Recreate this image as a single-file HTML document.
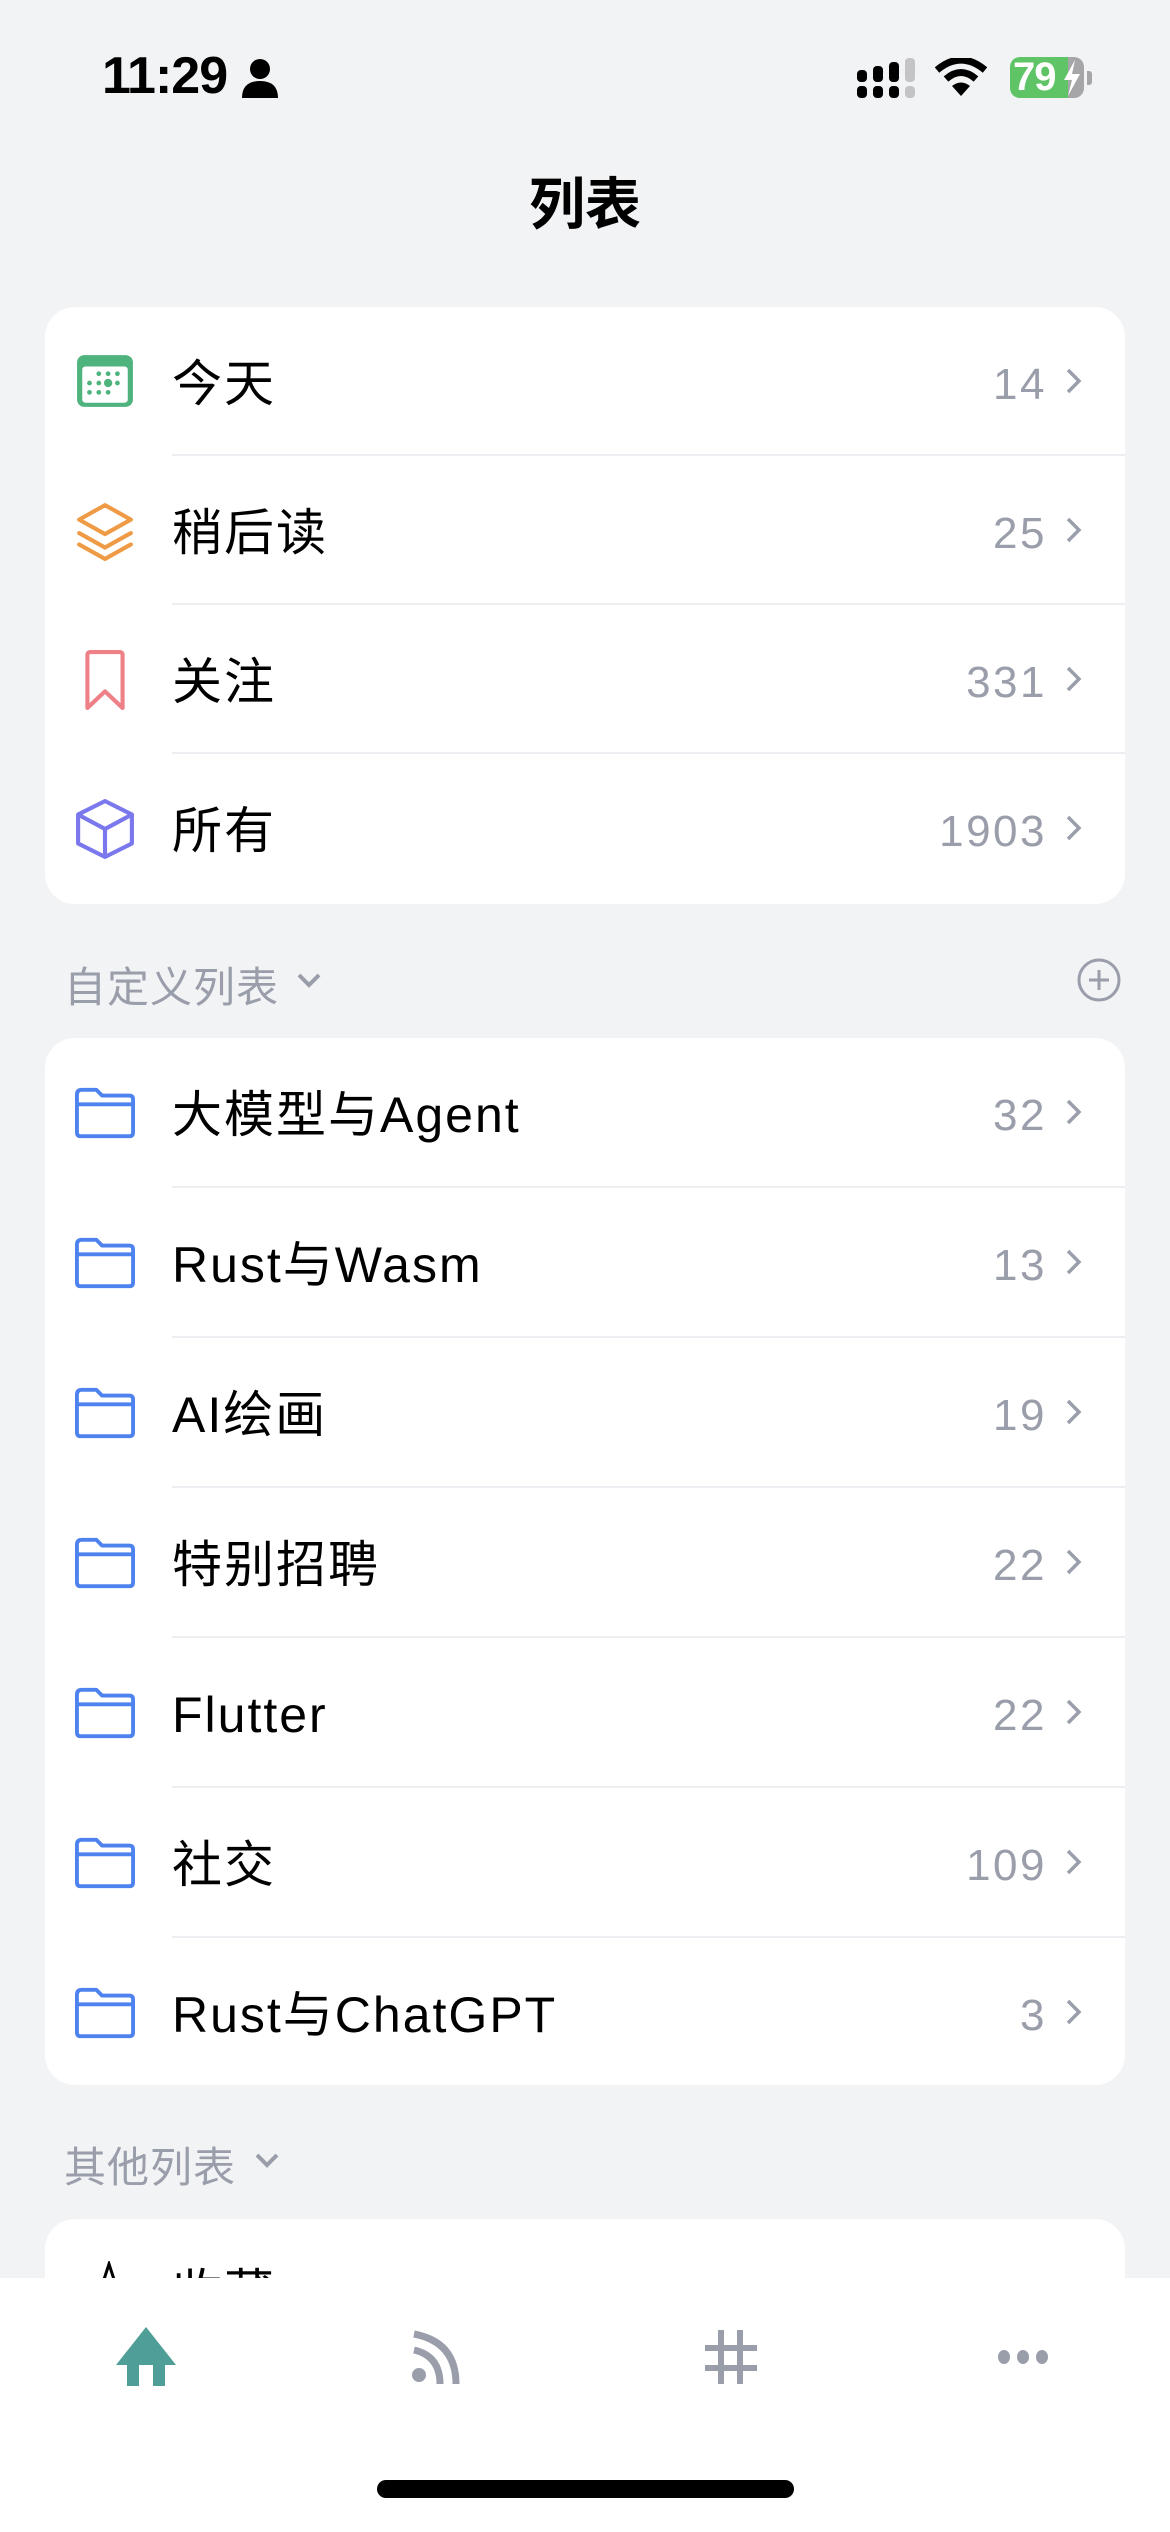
<!DOCTYPE html>
<html><head><meta charset="utf-8">
<style>
*{margin:0;padding:0;box-sizing:border-box}
body{width:1170px;height:2532px;background:#f2f3f5;font-family:"Liberation Sans","Noto Sans CJK SC",sans-serif;position:relative;overflow:hidden;color:#000}
.abs{position:absolute}
.card{position:absolute;left:45px;width:1080px;background:#fff;border-radius:30px;overflow:hidden}
.row{position:relative;height:149px}
#c2 .row{height:150px}
.row .ic{position:absolute;left:30px;top:45px;width:60px;height:60px}
.row .t{position:absolute;left:127px;top:3px;line-height:149px;font-size:50px;letter-spacing:2px}
.row .c{position:absolute;right:78px;top:3px;line-height:149px;font-size:44px;color:#9a9eab;letter-spacing:2.5px}
.row .ch{position:absolute;right:42px;top:60px;width:18px;height:28px}
.row .sep{position:absolute;left:127px;right:0;bottom:0;height:2px;background:#eceef1}
.hdr{position:absolute;left:64px;font-size:42px;color:#9a9eab;letter-spacing:1px}
</style></head><body>
<!-- status bar -->
<div class="abs" style="left:102px;top:46px;font-size:52px;font-weight:bold;letter-spacing:-1px">11:29</div>
<svg class="abs" style="left:241px;top:58px" width="38" height="40" viewBox="0 0 38 40"><circle cx="19" cy="11" r="10" fill="#000"/><path d="M1 40 Q1 23 19 23 Q37 23 37 40Z" fill="#000"/></svg>
<svg class="abs" style="left:855px;top:56px" width="62" height="44" viewBox="0 0 62 44">
<rect x="2" y="14" width="10" height="12" rx="4" fill="#000"/><rect x="2" y="30" width="10" height="12" rx="4" fill="#000"/>
<rect x="18" y="10" width="10" height="16" rx="4" fill="#000"/><rect x="18" y="30" width="10" height="12" rx="4" fill="#000"/>
<rect x="34" y="6" width="10" height="20" rx="4" fill="#000"/><rect x="34" y="30" width="10" height="12" rx="4" fill="#000"/>
<rect x="50" y="2" width="10" height="24" rx="4" fill="#c4c4c6"/><rect x="50" y="30" width="10" height="12" rx="4" fill="#c4c4c6"/></svg>
<svg class="abs" style="left:935px;top:58px" width="52" height="40" viewBox="0 0 52 40"><path d="M2 12 Q26 -8 50 12" stroke="#000" stroke-width="7" fill="none"/><path d="M11 21 Q26 8 41 21" stroke="#000" stroke-width="7" fill="none"/><path d="M17 28 L26 38 L35 28 Q26 21 17 28Z" fill="#000"/></svg>
<div class="abs" style="left:1010px;top:57px;width:60px;height:41px;background:#5ec466;border-radius:10px 0 0 10px"></div>
<div class="abs" style="left:1068px;top:57px;width:16px;height:41px;background:#a6a6a8;border-radius:0 10px 10px 0"></div>
<div class="abs" style="left:1087px;top:71px;width:5px;height:14px;background:#a6a6a8;border-radius:0 3px 3px 0"></div>
<div class="abs" style="left:1013px;top:55px;font-size:40px;font-weight:bold;color:#fff;letter-spacing:-1px">79</div>
<svg class="abs" style="left:1062px;top:60px" width="20" height="36" viewBox="0 0 20 36"><path d="M13 0 L2 20 H10 L6 36 L18 14 H10Z" fill="#fff"/></svg>
<!-- title -->
<div class="abs" style="left:0;width:1170px;top:160px;text-align:center;font-size:56px;font-weight:bold">列表</div>

<!-- card 1 -->
<div class="card" style="top:307px;height:597px">
 <div class="row"><svg class="ic" viewBox="0 0 58 58"><rect x="2" y="3" width="54" height="50" rx="7" fill="#4fb37e"/><rect x="7" y="14" width="44" height="35" rx="3" fill="#fff"/><g fill="#4fb37e"><circle cx="23" cy="21" r="2.3"/><circle cx="32" cy="21" r="2.3"/><circle cx="41" cy="21" r="2.3"/><circle cx="14" cy="30" r="2.3"/><circle cx="23" cy="30" r="2.3"/><circle cx="32" cy="30" r="4"/><circle cx="41" cy="30" r="2.3"/><circle cx="14" cy="39" r="2.3"/><circle cx="23" cy="39" r="2.3"/><circle cx="32" cy="39" r="2.3"/></g></svg><div class="t">今天</div><div class="c">14</div><svg class="ch" viewBox="0 0 18 28"><path d="M3 3 L14 14 L3 25" stroke="#9a9eab" stroke-width="3.5" fill="none"/></svg><div class="sep"></div></div>
 <div class="row"><svg class="ic" viewBox="0 0 58 58"><g stroke="#ef9a45" stroke-width="4" fill="none" stroke-linejoin="round" stroke-linecap="round"><path d="M29 4 L54 18 L29 32 L4 18Z"/><path d="M4 31 L29 45 L54 31"/><path d="M4 42 L29 56 L54 42"/></g></svg><div class="t">稍后读</div><div class="c">25</div><svg class="ch" viewBox="0 0 18 28"><path d="M3 3 L14 14 L3 25" stroke="#9a9eab" stroke-width="3.5" fill="none"/></svg><div class="sep"></div></div>
 <div class="row"><svg class="ic" viewBox="0 0 58 58"><path d="M12 56 V5 Q12 2 15 2 H43 Q46 2 46 5 V56 L29 40Z" stroke="#ee8088" stroke-width="4" fill="none" stroke-linejoin="round"/></svg><div class="t">关注</div><div class="c">331</div><svg class="ch" viewBox="0 0 18 28"><path d="M3 3 L14 14 L3 25" stroke="#9a9eab" stroke-width="3.5" fill="none"/></svg><div class="sep"></div></div>
 <div class="row"><svg class="ic" viewBox="0 0 58 58"><g stroke="#7b78ee" stroke-width="4" fill="none" stroke-linejoin="round"><path d="M29 2 L55 15 V43 L29 56 L3 43 V15Z"/><path d="M3 15 L29 29 L55 15 M29 29 V56"/></g></svg><div class="t">所有</div><div class="c">1903</div><svg class="ch" viewBox="0 0 18 28"><path d="M3 3 L14 14 L3 25" stroke="#9a9eab" stroke-width="3.5" fill="none"/></svg></div>
</div>

<div class="hdr" style="top:954px">自定义列表</div>
<svg class="abs" style="left:296px;top:972px" width="26" height="18" viewBox="0 0 26 18"><path d="M3 3 L13 13 L23 3" stroke="#9a9eab" stroke-width="4" fill="none"/></svg>
<svg class="abs" style="left:1076px;top:957px" width="46" height="46" viewBox="0 0 46 46"><circle cx="23" cy="23" r="20" stroke="#9a9eab" stroke-width="3" fill="none"/><path d="M23 13 V33 M13 23 H33" stroke="#9a9eab" stroke-width="3"/></svg>

<!-- card 2 -->
<div class="card" id="c2" style="top:1038px;height:1047px">
 <div class="row"><svg class="ic" viewBox="0 0 62 58"><path d="M2 10 Q2 5 7 5 H22 L28 11 H56 Q60 11 60 15 V49 Q60 53 56 53 H6 Q2 53 2 49Z M2 20 H60" stroke="#4e82ee" stroke-width="4" fill="none" stroke-linejoin="round"/></svg><div class="t">大模型与Agent</div><div class="c">32</div><svg class="ch" viewBox="0 0 18 28"><path d="M3 3 L14 14 L3 25" stroke="#9a9eab" stroke-width="3.5" fill="none"/></svg><div class="sep"></div></div>
 <div class="row"><svg class="ic" viewBox="0 0 62 58"><path d="M2 10 Q2 5 7 5 H22 L28 11 H56 Q60 11 60 15 V49 Q60 53 56 53 H6 Q2 53 2 49Z M2 20 H60" stroke="#4e82ee" stroke-width="4" fill="none" stroke-linejoin="round"/></svg><div class="t">Rust与Wasm</div><div class="c">13</div><svg class="ch" viewBox="0 0 18 28"><path d="M3 3 L14 14 L3 25" stroke="#9a9eab" stroke-width="3.5" fill="none"/></svg><div class="sep"></div></div>
 <div class="row"><svg class="ic" viewBox="0 0 62 58"><path d="M2 10 Q2 5 7 5 H22 L28 11 H56 Q60 11 60 15 V49 Q60 53 56 53 H6 Q2 53 2 49Z M2 20 H60" stroke="#4e82ee" stroke-width="4" fill="none" stroke-linejoin="round"/></svg><div class="t">AI绘画</div><div class="c">19</div><svg class="ch" viewBox="0 0 18 28"><path d="M3 3 L14 14 L3 25" stroke="#9a9eab" stroke-width="3.5" fill="none"/></svg><div class="sep"></div></div>
 <div class="row"><svg class="ic" viewBox="0 0 62 58"><path d="M2 10 Q2 5 7 5 H22 L28 11 H56 Q60 11 60 15 V49 Q60 53 56 53 H6 Q2 53 2 49Z M2 20 H60" stroke="#4e82ee" stroke-width="4" fill="none" stroke-linejoin="round"/></svg><div class="t">特别招聘</div><div class="c">22</div><svg class="ch" viewBox="0 0 18 28"><path d="M3 3 L14 14 L3 25" stroke="#9a9eab" stroke-width="3.5" fill="none"/></svg><div class="sep"></div></div>
 <div class="row"><svg class="ic" viewBox="0 0 62 58"><path d="M2 10 Q2 5 7 5 H22 L28 11 H56 Q60 11 60 15 V49 Q60 53 56 53 H6 Q2 53 2 49Z M2 20 H60" stroke="#4e82ee" stroke-width="4" fill="none" stroke-linejoin="round"/></svg><div class="t">Flutter</div><div class="c">22</div><svg class="ch" viewBox="0 0 18 28"><path d="M3 3 L14 14 L3 25" stroke="#9a9eab" stroke-width="3.5" fill="none"/></svg><div class="sep"></div></div>
 <div class="row"><svg class="ic" viewBox="0 0 62 58"><path d="M2 10 Q2 5 7 5 H22 L28 11 H56 Q60 11 60 15 V49 Q60 53 56 53 H6 Q2 53 2 49Z M2 20 H60" stroke="#4e82ee" stroke-width="4" fill="none" stroke-linejoin="round"/></svg><div class="t">社交</div><div class="c">109</div><svg class="ch" viewBox="0 0 18 28"><path d="M3 3 L14 14 L3 25" stroke="#9a9eab" stroke-width="3.5" fill="none"/></svg><div class="sep"></div></div>
 <div class="row"><svg class="ic" viewBox="0 0 62 58"><path d="M2 10 Q2 5 7 5 H22 L28 11 H56 Q60 11 60 15 V49 Q60 53 56 53 H6 Q2 53 2 49Z M2 20 H60" stroke="#4e82ee" stroke-width="4" fill="none" stroke-linejoin="round"/></svg><div class="t">Rust与ChatGPT</div><div class="c">3</div><svg class="ch" viewBox="0 0 18 28"><path d="M3 3 L14 14 L3 25" stroke="#9a9eab" stroke-width="3.5" fill="none"/></svg></div>
</div>

<div class="hdr" style="top:2134px">其他列表</div>
<svg class="abs" style="left:254px;top:2152px" width="26" height="18" viewBox="0 0 26 18"><path d="M3 3 L13 13 L23 3" stroke="#9a9eab" stroke-width="4" fill="none"/></svg>

<!-- card 3 (partially hidden) -->
<div class="card" style="top:2219px;height:200px">
 <svg class="abs" style="left:49px;top:42px" width="30" height="40" viewBox="0 0 30 40"><path d="M3 40 L15 3 L27 40" stroke="#000" stroke-width="3" fill="none"/></svg>
 <div class="abs" style="left:127px;top:44px;font-size:50px;line-height:60px;letter-spacing:2px">收藏</div>
</div>

<!-- tab bar -->
<div class="abs" style="left:0;top:2278px;width:1170px;height:254px;background:#fff"></div>
<svg class="abs" style="left:115px;top:2325px" width="62" height="62" viewBox="0 0 62 62"><path d="M31 2 L61 40 H50 V61 H38 V40 H24 V61 H12 V40 H1Z" fill="#4f9e98"/></svg>
<svg class="abs" style="left:410px;top:2330px" width="50" height="54" viewBox="0 0 50 54"><g stroke="#9a9eab" stroke-width="7" fill="none"><path d="M4 4 Q46 12 46 54"/><path d="M4 20 Q30 26 30 54"/></g><circle cx="9" cy="45" r="7" fill="#9a9eab"/></svg>
<svg class="abs" style="left:705px;top:2330px" width="52" height="54" viewBox="0 0 52 54"><path d="M16 0 V54 M35 0 V54 M0 18 H52 M0 38 H52" stroke="#9a9eab" stroke-width="6"/></svg>
<svg class="abs" style="left:997px;top:2345px" width="52" height="24" viewBox="0 0 52 24"><g fill="#9a9eab"><ellipse cx="7" cy="12" rx="6" ry="7"/><ellipse cx="26" cy="12" rx="6" ry="7"/><ellipse cx="45" cy="12" rx="6" ry="7"/></g></svg>
<div class="abs" style="left:377px;top:2480px;width:417px;height:18px;background:#000;border-radius:9px"></div>
</body></html>
